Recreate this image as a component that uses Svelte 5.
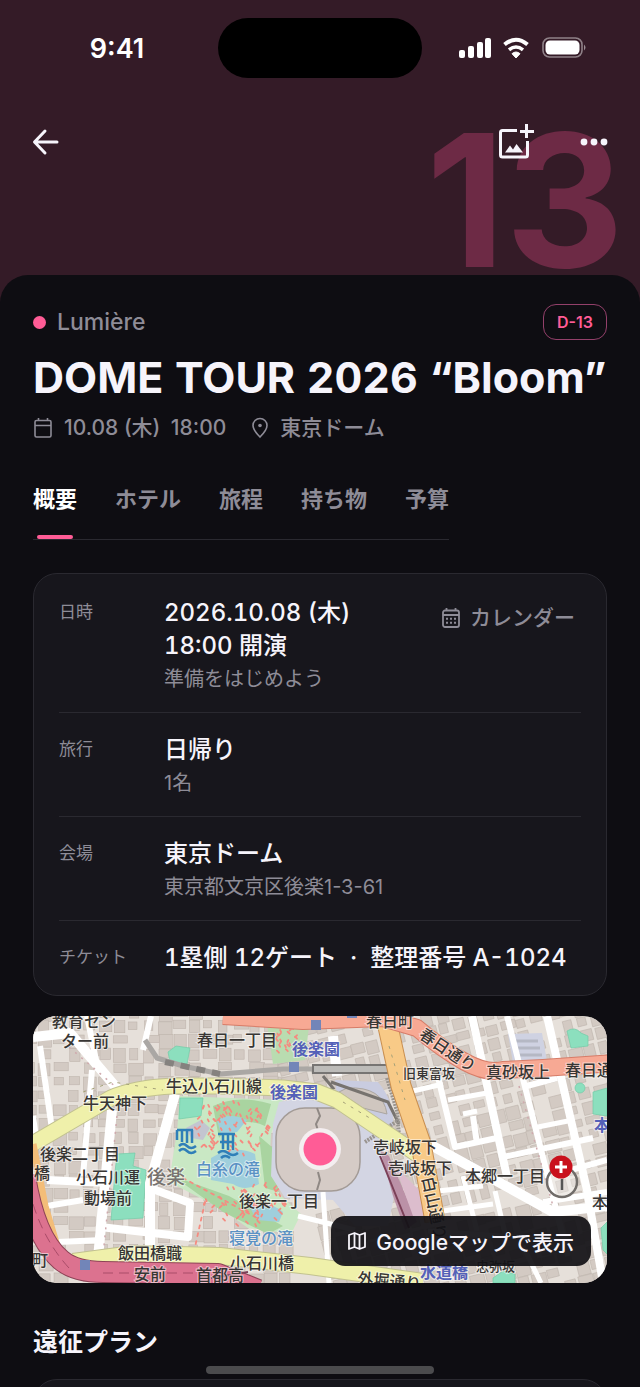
<script>
  const tabs = ["概要", "ホテル", "旅程", "持ち物", "予算"];
  let current = $state("概要");

  const rows = [
    { label: "日時", lines: ["2026.10.08 (木)", "18:00 開演"], sub: "準備をはじめよう", calendar: true },
    { label: "旅行", lines: ["日帰り"], sub: "1名" },
    { label: "会場", lines: ["東京ドーム"], sub: "東京都文京区後楽1-3-61" },
    { label: "チケット", lines: ["1塁側 12ゲート  ·  整理番号 A-1024"] },
  ];

  // small deterministic generator so the blocks are the same on every load
  function makeRandom(seed) {
    let s = seed;
    return () => (s = (s * 16807) % 2147483647) / 2147483647;
  }

  function makeBlocks(seed, x0, y0, x1, y1) {
    const rnd = makeRandom(seed);
    const out = [];
    for (let y = y0; y < y1; y += 14) {
      for (let x = x0; x < x1; x += 15) {
        if (rnd() < 0.12) continue;
        out.push({ x: x + rnd() * 2, y: y + rnd() * 2, w: 8 + rnd() * 7, h: 7 + rnd() * 7 });
      }
    }
    return out;
  }

  function makeTrees(seed, count, x, y, w, h) {
    const rnd = makeRandom(seed);
    return Array.from({ length: count }, () => {
      const a = rnd() * 6.28;
      const r = Math.sqrt(rnd());
      return { x: x + Math.cos(a) * r * w, y: y + Math.sin(a) * r * h };
    });
  }

  const westBlocks = makeBlocks(41, -10, -10, 260, 270);
  const eastBlocks = makeBlocks(97, 300, 0, 700, 420);
  const trees = [
    ...makeTrees(7, 90, 195, 112, 40, 28),
    ...makeTrees(19, 60, 212, 188, 42, 22),
    ...makeTrees(23, 22, 252, 26, 15, 17),
  ];

  const minorRoads = [
    { w: 6, d: "M7 30L20 120M59 54L50 160M54 0L65 54M110 34L118 0M14 190L50 184M24 226L70 224M0 100L4 130" },
    { w: 10, d: "M0 21L37 17L87 76M79 94L65 242M142 78L117 167V238" },
    { w: 8, d: "M14 164L74 167M117 172L157 187L155 221L67 211M439 0L474 161M514 0L554 174L570 267" },
    { w: 6, d: "M474 0L535 240M405 61L422 131L464 122M470 141L560 122M490 71L524 62M524 158L574 144M510 186L574 176M440 100L444 128" },
    { w: 10, d: "M396 128L520 196L574 190M300 20L304 60" },
    { w: 5, d: "M405 175L450 170M410 195L460 188M430 160L444 215M462 175L475 230M265 200L322 214M290 176L296 267M395 215L540 225M415 84L454 77M444 95L430 98M500 112L540 104M490 230L508 267M380 75L410 68" },
  ];

  const labels = [
    { t: "教育セン", x: 19, y: 11 },
    { t: "ター前", x: 28, y: 31 },
    { t: "春日一丁目", x: 164, y: 30 },
    { t: "牛込小石川線", x: 133, y: 76 },
    { t: "牛天神下", x: 50, y: 93 },
    { t: "後楽二丁目", x: 7, y: 144 },
    { t: "橋", x: 1, y: 163 },
    { t: "小石川運", x: 43, y: 167 },
    { t: "動場前", x: 51, y: 188 },
    { t: "後楽", x: 114, y: 168, c: "area" },
    { t: "白糸の滝", x: 163, y: 159, c: "water" },
    { t: "後楽一丁目", x: 206, y: 191 },
    { t: "寝覚の滝", x: 196, y: 228, c: "water" },
    { t: "小石川橋", x: 197, y: 253 },
    { t: "飯田橋職", x: 85, y: 243 },
    { t: "安前", x: 101, y: 264 },
    { t: "首都高", x: 163, y: 265 },
    { t: "町", x: -1, y: 250 },
    { t: "後楽園", x: 259, y: 39, c: "station" },
    { t: "後楽園", x: 237, y: 82, c: "station" },
    { t: "春日町", x: 333, y: 11 },
    { t: "春日通り", x: 385, y: 21, r: 34 },
    { t: "旧東富坂", x: 370, y: 62, c: "small" },
    { t: "真砂坂上", x: 453, y: 62 },
    { t: "春日通", x: 532, y: 60 },
    { t: "本", x: 561, y: 115, c: "station" },
    { t: "壱岐坂下", x: 340, y: 137 },
    { t: "壱岐坂下", x: 355, y: 158 },
    { t: "白山通り", x: 389, y: 162, r: 78 },
    { t: "本郷一丁目", x: 432, y: 166 },
    { t: "本", x: 559, y: 192 },
    { t: "水道橋", x: 387, y: 262, c: "station" },
    { t: "忠弥坂", x: 443, y: 255, c: "small" },
    { t: "外堀通り", x: 324, y: 268, r: 5 },
  ];
</script>

<div class="screen">
  <header class="hero">
    <div class="days" aria-hidden="true">13</div>

    <div class="status">
      <span class="time">9:41</span>
      <span class="island"></span>
      <svg class="signals" viewBox="0 0 130 24" width="130" height="24" aria-hidden="true">
        <g fill="#fff">
          <rect x="0" y="14" width="6" height="8" rx="2" />
          <rect x="9" y="10" width="6" height="12" rx="2" />
          <rect x="18" y="6" width="6" height="16" rx="2" />
          <rect x="26" y="2" width="6" height="20" rx="2" />
          <path d="M57 22l-4-4.300q4-3.400 8 0z" stroke="#fff" stroke-linejoin="round" />
        </g>
        <g fill="none" stroke="#fff" stroke-width="4">
          <path d="M45.500 8.500q11.500-9.500 23 0" />
          <path d="M50 13.800q7-5.600 14 0" stroke-width="3.600" />
        </g>
        <rect x="84" y="2" width="39" height="19" rx="6.500" fill="none" stroke="#fff" stroke-opacity=".45" stroke-width="1.600" />
        <rect x="86.500" y="4.500" width="34" height="14" rx="4.500" fill="#fff" />
        <path d="M125 8.500q3 3 0 6z" fill="#fff" fill-opacity=".5" />
      </svg>
    </div>

    <nav class="bar">
      <button class="icon" aria-label="戻る">
        <svg viewBox="0 0 28 28" width="28" height="28" fill="none" stroke="currentColor" stroke-width="3" stroke-linecap="round" stroke-linejoin="round">
          <path d="M25 14H3M13 3L2.500 14L13 25" />
        </svg>
      </button>
      <span class="actions">
        <button class="icon" aria-label="画像を追加">
          <svg viewBox="0 0 36 36" width="36" height="36" fill="none" stroke="currentColor" stroke-width="3">
            <path d="M19 6.500H4.500Q2.500 6.500 2.500 8.500V31Q2.500 33 4.500 33H27.500Q29.500 33 29.500 31V17" />
            <path d="M28.500 0V14M22 7.500H36" />
            <path d="M7 28.500L12 21.500L15 25.500L18.500 20L25 28.500Z" fill="currentColor" stroke="none" />
          </svg>
        </button>
        <button class="icon" aria-label="メニュー">
          <svg viewBox="0 0 28 10" width="28" height="10" fill="currentColor">
            <circle cx="4" cy="5" r="3.400" /><circle cx="14" cy="5" r="3.400" /><circle cx="24" cy="5" r="3.400" />
          </svg>
        </button>
      </span>
    </nav>
  </header>

  <main class="sheet">
    <div class="top">
      <span class="artist"><i class="dot"></i>Lumière</span>
      <span class="badge">D-13</span>
    </div>
    <h1>DOME TOUR 2026 “Bloom”</h1>
    <div class="meta">
      <span class="item">
        <svg viewBox="0 0 20 22" width="20" height="22" fill="none" stroke="currentColor" stroke-width="1.600">
          <rect x="2" y="3.500" width="16" height="16.500" rx="1.500" />
          <path d="M2 8.500H18M5.500 1V4M14.500 1V4" />
        </svg>
        <span class="when">10.08 (木)&ensp;18:00</span>
      </span>
      <span class="item">
        <svg viewBox="0 0 18 22" width="18" height="22" fill="none" stroke="currentColor" stroke-width="1.600">
          <path d="M9 20Q2 13 2 8.500A7 7 0 0 1 16 8.500Q16 13 9 20Z" />
          <circle cx="9" cy="8.500" r="1.800" fill="currentColor" stroke="none" />
        </svg>
        東京ドーム
      </span>
    </div>

    <div class="tabs" role="tablist">
      {#each tabs as tab}
        <button
          class="tab"
          class:active={tab === current}
          role="tab"
          aria-selected={tab === current}
          onclick={() => (current = tab)}
        >{tab}</button>
      {/each}
    </div>

    <dl class="card">
      {#each rows as row}
        <div class="row">
          <dt>{row.label}</dt>
          <dd>
            {#each row.lines as line}
              <span class="value">{line}</span>
            {/each}
            {#if row.sub}
              <span class="sub">{row.sub}</span>
            {/if}
          </dd>
          {#if row.calendar}
            <dd>
              <button class="calendar">
                <svg viewBox="0 0 20 22" width="20" height="22" fill="none" stroke="currentColor" stroke-width="1.800">
                  <rect x="2" y="3.500" width="16" height="16.500" rx="2" />
                  <path d="M2 8H18M5.500 1V4M14.500 1V4" />
                  <path d="M5 11.700H15M5 15.700H15" stroke-width="2" stroke-dasharray="2 2" />
                </svg>
                カレンダー
              </button>
            </dd>
          {/if}
        </div>
      {/each}
    </dl>

    <section class="map" aria-label="地図">
      <svg class="tiles" viewBox="0 0 574 267" preserveAspectRatio="xMidYMid slice">
        <rect width="574" height="267" fill="#e6e0da" />
        <g fill="#d3cac3" stroke="#bfb5ad" stroke-width=".6">
          {#each westBlocks as b}
            <rect x={b.x} y={b.y} width={b.w} height={b.h} />
          {/each}
          <g transform="rotate(-14 450 130)">
            {#each eastBlocks as b}
              <rect x={b.x - 30} y={b.y - 70} width={b.w} height={b.h} />
            {/each}
          </g>
        </g>
        <path d="M475 18L509 17L514 45L480 47Z" fill="#cfd2e2" />
        <path d="M482 25H505M483 32H507M484 39H509" stroke="#b5b8c4" stroke-width="3" />

        <!-- garden and ponds -->
        <path d="M147 80L250 84L238 118L236 158L246 178L268 198L258 218L215 212L187 192L136 166L144 115Z" fill="#c9e8c4" />
        <path d="M234 8L276 10L272 44L240 48Z" fill="#b9dcb0" />
        <path d="M180 90Q205 78 238 88L232 110Q205 98 186 122ZM226 120L240 132L246 176L232 172ZM140 160L196 180L250 210L235 218L190 196Z" fill="#a9d4a0" />
        <path d="M178 142Q200 128 222 138L226 168Q212 176 200 168L178 164ZM216 190Q236 184 250 196L246 206L224 204ZM184 104Q196 96 214 104L204 116L188 118Z" fill="#9fcfdc" />
        <path d="M153 112L168 104L177 112L170 124L158 122Z" fill="#c3c5d0" />
        <g fill="#8cdfbe" stroke="#72cba8" stroke-width=".7">
          <path d="M84 138L102 137L100 150L113 154L110 202L78 204L82 156Z" />
          <path d="M147 82H170L168 100L146 103Z" />
          <path d="M135 36L143 30L157 32L154 48L137 46Z" />
          <path d="M534 15Q542 10 548 17L555 20V30L538 32Z" />
          <path d="M560 76L574 72V100L560 98Z" /><circle cx="547" cy="72" r="5" />
          <path d="M460 262L470 255L482 258V267H460Z" />
          <path d="M568 212L574 206V238L570 234Z" />
        </g>

        <!-- dome grounds -->
        <path d="M246 86L290 78L330 92L346 118L350 146L362 176L355 210L322 210L300 184L252 182L238 160L240 108Z" fill="#d3d5e3" />
        <path d="M302 64L345 66Q362 86 360 110L334 102L304 82Z" fill="#c9cce0" />
        <path d="M314 72Q350 70 354 98L330 92L306 76Z" fill="#cfc6bf" stroke="#aaa5a0" />
        <path d="M347 134L356 140L384 206L372 214L360 180Z" fill="#bb91a7" />
        <path d="M362 150L392 180L396 202L380 200Z" fill="#dcbdcd" />

        {#each minorRoads as road}
          <path d={road.d} fill="none" stroke="#fff" stroke-width={road.w} stroke-linejoin="round" />
        {/each}
        <path d="M84 100L70 240M30 26L84 72M486 70L520 190" fill="none" stroke="#cfa9ad" stroke-width="1.500" stroke-dasharray="2 6" />

        <rect x="243" y="92" width="84" height="83" rx="29" fill="#d5cbc6" stroke="#a39b96" stroke-width="1.500" />
        <path d="M284 92L287 100L283 108L286 118M285 156L287 164L284 174" fill="none" stroke="#8f8884" stroke-width="2" />

        <g stroke="#f58b80" stroke-width="1.800" stroke-linecap="round">
          {#each trees as t, i}
            <path d="M{t.x} {t.y}l{i % 2 ? 2 : 1} {i % 3 ? 2 : -2}" />
          {/each}
          <path d="M150 162L224 202M172 186L160 240" stroke-dasharray="3 5" fill="none" />
        </g>

        <!-- rail -->
        <g fill="none">
          <path d="M112 24L124 42L150 50L187 58L250 53L370 53" stroke="#aaa7a4" stroke-width="5" />
          <path d="M132 46L187 58" stroke="#85827f" stroke-width="6" stroke-dasharray="9 7" />
          <path d="M279 53H371" stroke="#777573" stroke-width="10" />
          <path d="M281 53H371" stroke="#bdbcb9" stroke-width="6" />
          <path d="M290 60L300 72L290 78M298 66L355 86L366 108" stroke="#77736f" stroke-width="3" />
          <path d="M354 62L364 95L366 120M332 126L366 104" stroke="#99948f" stroke-width="4" stroke-dasharray="2 1" />
        </g>

        <!-- main roads, casing first -->
        <g fill="none" stroke-linejoin="round">
          <path d="M-4 130L78 82Q100 72 140 70L187 70L250 72L284 76L304 84L384 138" stroke="#c2c290" stroke-width="17" />
          <path d="M-4 130L78 82Q100 72 140 70L187 70L250 72L284 76L304 84L384 138" stroke="#eff0aa" stroke-width="15" />
          <path d="M40 246L100 238L187 240L277 250L390 266" stroke="#c2c290" stroke-width="18" />
          <path d="M40 246L100 238L187 240L277 250L390 266" stroke="#eff0aa" stroke-width="16" />
          <path d="M0 128L12 190L27 240" stroke="#f3bd78" stroke-width="7" />
          <path d="M354 6L368 70L388 128L402 205" stroke="#c98f50" stroke-width="21" />
          <path d="M354 6L368 70L388 128L402 205" stroke="#f8ca87" stroke-width="19" />
          <path d="M190 0L270 5L350 2L384 12Q410 34 432 46T470 54L510 52L580 47" stroke="#d67c68" stroke-width="18" />
          <path d="M190 0L270 5L350 2L384 12Q410 34 432 46T470 54L510 52L580 47" stroke="#f7a994" stroke-width="16" />
          <path d="M-8 160Q2 222 28 244Q42 256 70 256L185 258L225 274" stroke="#8e4357" stroke-width="22" />
          <path d="M-8 160Q2 222 28 244Q42 256 70 256L185 258L225 274" stroke="#dc728f" stroke-width="20" />
          <path d="M0 188Q12 226 36 252M70 257H180" stroke="#a94c68" stroke-dasharray="10 6" />
          <path d="M50 76L80 66L130 74M310 86L340 104M356 30L372 84" stroke="#a5a178" stroke-dasharray="3 6" />
          <path d="M347 140L376 212M178 262L215 256" stroke="#7b4058" stroke-width="2" />
        </g>

        <g fill="#7285b8">
          <rect x="278" y="4" width="10" height="10" /><rect x="256" y="46" width="10" height="10" />
          <rect x="314" y="-4" width="10" height="6" /><rect x="47" y="244" width="10" height="10" />
        </g>

        <!-- waterfall marks -->
        <g fill="none" stroke="#2f7fb8" stroke-width="2.500">
          <path d="M144 114H160M149 114V126M154 114V127M159 114V127M144 114V124M146 130Q150 126 154 130T163 130M146 135Q150 131 154 135T163 135" />
          <path d="M185 118H202M190 118V133M195 118V134M200 118V134M187 126H201M185 137Q190 133 195 137T205 137M188 142Q192 138 197 142" />
        </g>

        {#each labels as l}
          <text class={["label", l.c]} transform="translate({l.x} {l.y}) rotate({l.r ?? 0})">{l.t}</text>
        {/each}

        <circle cx="529" cy="166" r="15" fill="#fff" fill-opacity=".35" stroke="#706c69" stroke-width="2.500" />
        <circle cx="528" cy="151" r="11.500" fill="#c9101c" />
        <path d="M528 145V157M522 151H534" stroke="#fff" stroke-width="3" />
        <path d="M529 163V174" stroke="#555" stroke-width="2.500" />

        <circle cx="287" cy="133" r="21" fill="#f4eef0" />
        <circle cx="287" cy="133" r="16.500" fill="#ff5c96" />
      </svg>
      <button class="open-map">
        <svg viewBox="0 0 18 18" width="18" height="18" fill="none" stroke="currentColor" stroke-width="1.800" stroke-linejoin="round">
          <path d="M1 3L6.500 1L11.500 3L17 1V15L11.500 17L6.500 15L1 17ZM6.500 1V15M11.500 3V17" />
        </svg>
        Googleマップで表示
      </button>
    </section>

    <h2>遠征プラン</h2>
    <div class="card plan"></div>
  </main>

  <span class="home"></span>
</div>

<style>
  :global(body) { margin: 0; background: #0e0d12; }

  .screen {
    --pink: #ff5c96;
    --muted: #8e8c97;
    position: relative;
    height: 100vh;
    overflow: hidden;
    background: #341b27;
    color: #f6f4fb;
    font-family: Inter, "Noto Sans CJK JP", sans-serif;
    font-size: 22px;
  }
  button {
    padding: 0; border: 0;
    background: none; color: inherit;
    font: inherit; cursor: pointer;
  }
  svg { display: block; flex: none; }

  .hero { position: relative; height: 275px; }
  .days {
    position: absolute; right: 16px; bottom: 8px;
    color: #6d2a45;
    font-size: 184px; font-weight: 700; line-height: 134px;
  }
  .status {
    position: relative;
    display: grid; grid-template-columns: 1fr 204px 1fr; align-items: center;
    height: 96px;
  }
  .time { justify-self: center; padding-left: 16px; font-size: 27px; font-weight: 600; color: #fff; }
  .island { height: 60px; border-radius: 30px; background: #000; }
  .signals { justify-self: center; margin-right: 14px; }

  .bar {
    position: relative;
    display: flex; justify-content: space-between; align-items: center;
    height: 92px; padding: 0 32px;
  }
  .actions { display: flex; align-items: center; gap: 46px; }

  .sheet {
    min-height: 100%;
    box-sizing: border-box;
    padding: 29px 33px 0;
    border-radius: 28px 28px 0 0;
    background: #0e0d12;
  }
  .top { display: flex; justify-content: space-between; align-items: center; height: 36px; }
  .artist { display: flex; align-items: center; gap: 11px; color: var(--muted); font-size: 23px; font-weight: 500; }
  .dot { width: 13px; height: 13px; border-radius: 50%; background: var(--pink); }
  .badge {
    padding: 0 13px;
    border: 1px solid #93406a; border-radius: 13px;
    color: var(--pink);
    font-size: 16px; font-weight: 600; line-height: 34px;
  }
  h1, .value { font-variant-numeric: tabular-nums; }
  h1 { margin: 11px 0 9px; font-size: 43px; font-weight: 700; line-height: 52px; white-space: nowrap; }

  .meta { display: flex; gap: 25px; color: var(--muted); font-size: 21px; font-weight: 500; line-height: 32px; }
  .item { display: flex; align-items: center; gap: 11px; }

  .tabs {
    display: flex; gap: 38px;
    width: max-content;
    margin-top: 39px;
    border-bottom: 1px solid #2a2930;
  }
  .tab { position: relative; padding-bottom: 23px; color: var(--muted); font-weight: 700; line-height: 33px; }
  .tab.active { color: #fff; }
  .tab.active::after {
    content: "";
    position: absolute; left: 4px; right: 4px; bottom: 0;
    height: 4px; border-radius: 2px;
    background: var(--pink);
  }

  .card {
    margin: 33px 0 20px; padding: 2px 25px 1px;
    border: 1px solid #2a2930; border-radius: 24px;
    background: #17161c;
  }
  .row { display: flex; padding: 20px 0 19px; border-bottom: 1px solid #2a2930; }
  .row:last-child { border-bottom: 0; padding-bottom: 20px; }
  dt { width: 105px; flex: none; color: var(--muted); font-size: 17px; line-height: 33px; }
  dd { margin: 0; }
  dd:last-child:not(:nth-child(2)) { margin-left: auto; }
  .value { display: block; font-size: 24px; font-weight: 500; line-height: 33px; white-space: pre; }
  .sub { display: block; margin-top: 3px; color: var(--muted); font-size: 20px; line-height: 28px; }
  .calendar {
    display: flex; align-items: center; gap: 9px;
    margin: 6px 6px 0 0;
    color: var(--muted);
    font-size: 21px; font-weight: 500; line-height: 32px;
  }

  .map { position: relative; border-radius: 24px; overflow: hidden; }
  .tiles { width: 100%; height: 267px; }
  .label {
    font-family: "Noto Sans CJK JP", sans-serif; font-size: 16px; font-weight: 500;
    fill: #383634; stroke: #fff; stroke-opacity: .55; stroke-width: 2px; paint-order: stroke;
  }
  .label.small { font-size: 13px; }
  .label.area { font-size: 19px; fill: #77736f; }
  .label.water { fill: #5a91c4; }
  .label.station { font-weight: 700; fill: #5461b8; }

  .open-map {
    position: absolute; right: 16px; bottom: 17px;
    display: flex; align-items: center; gap: 10px;
    height: 50px; padding: 0 17px;
    border-radius: 14px;
    background: rgba(18, 17, 22, .93);
    font-size: 21px; font-weight: 500;
  }

  h2 { margin: 41px 0 19px; font-size: 25px; font-weight: 700; line-height: 36px; }
  .plan { height: 200px; margin: 0; }
  .home {
    position: absolute; left: 50%; bottom: 13px;
    width: 228px; height: 8px; margin-left: -114px;
    border-radius: 4px;
    background: #4b4b4d;
  }
</style>
